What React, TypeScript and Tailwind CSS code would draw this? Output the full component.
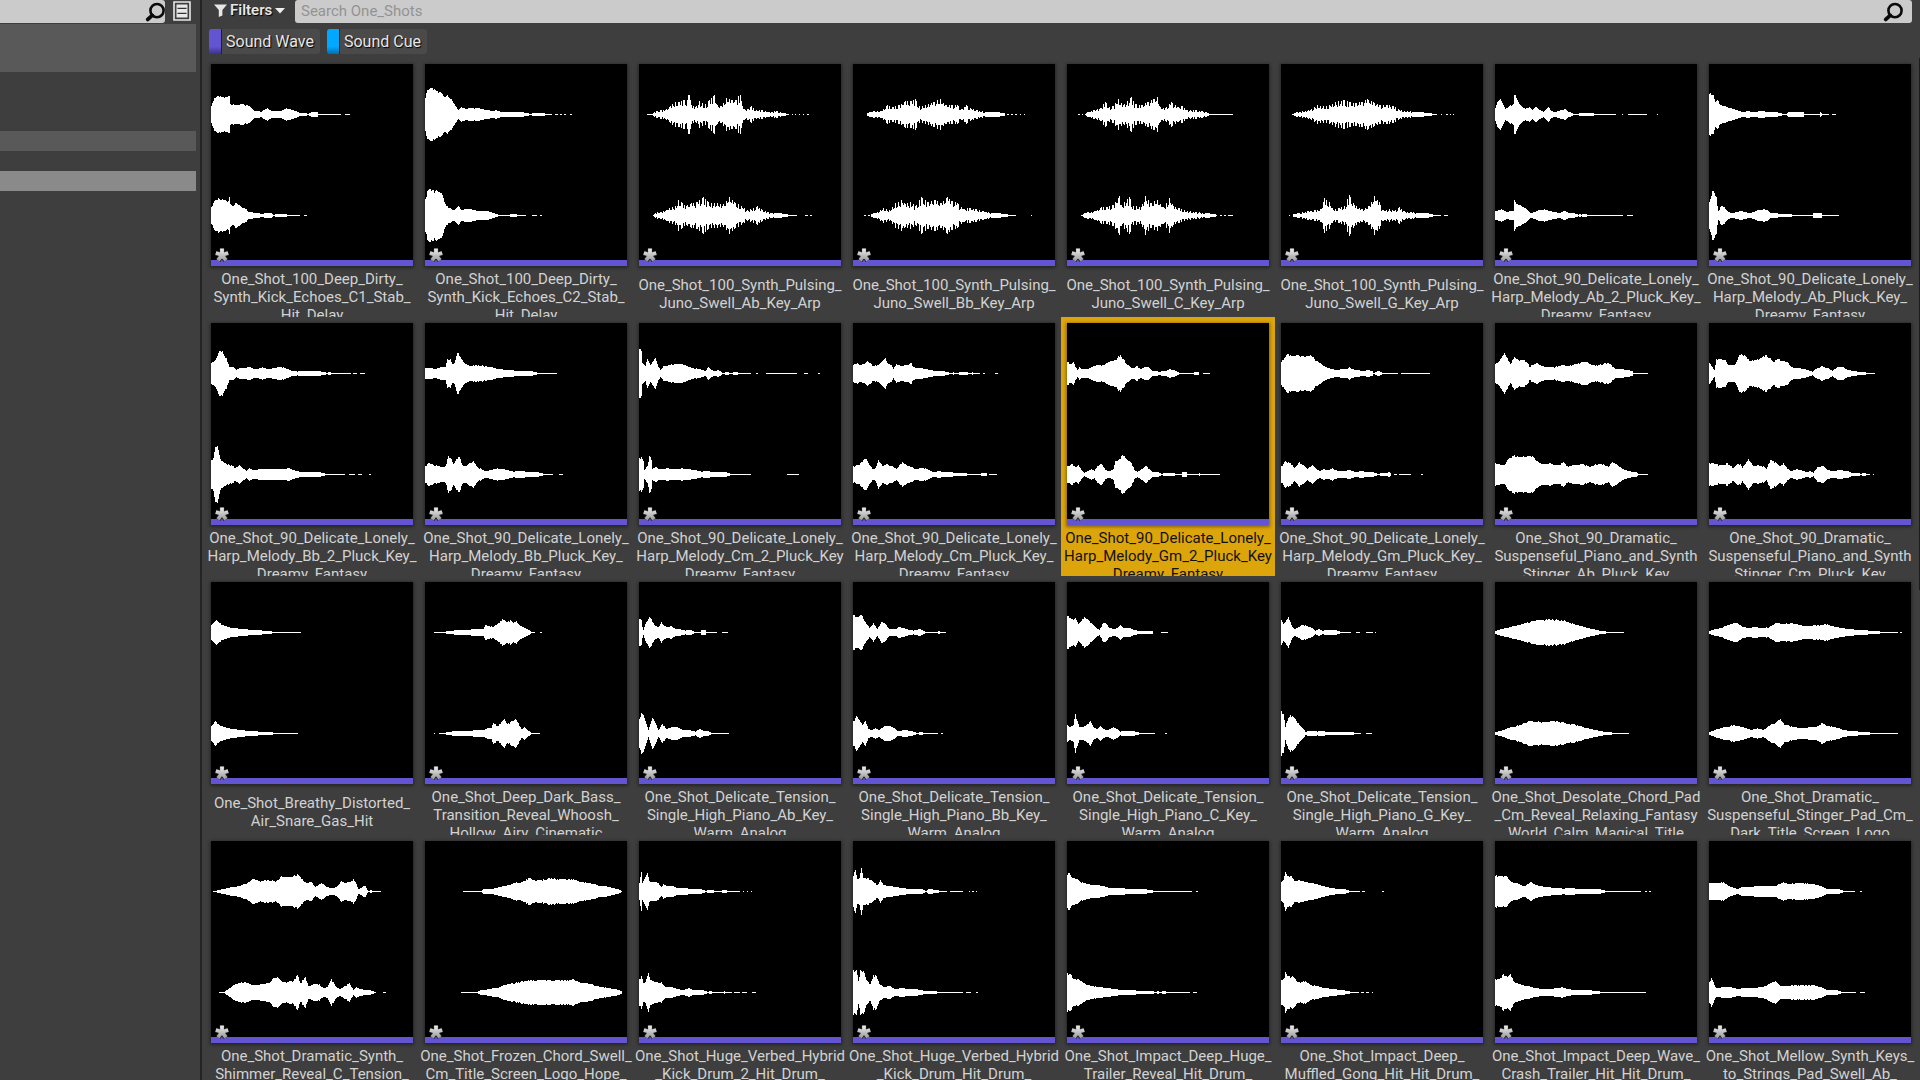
import { useId, useState } from "react";

type Sound = {
  label: string[];
  left: string;
  right: string;
  pulse?: boolean;
};

// Channel envelopes are "x height, x height, ...|dash-dash ..." on a 202 unit wide thumbnail.
const SOUNDS: Sound[] = [
  {
    label: ["One_Shot_100_Deep_Dirty_", "Synth_Kick_Echoes_C1_Stab_", "Hit_Delay"],
    left: "0 8,3 16,6 18,16 17,17 18,18 18,19 10,25 9,31 10,38 8,42 4,44 3,50 2.5,56 6,60 3,70 3,75 6,83 3.5,88 1.5,94 1.5,96 .5,98 1,100 2,106 2,107 .5,130 .5|134-139",
    right: "0 8,3 14,7 17,12 15,17 14,18 18,19 11,22 9,24 12,28 10,32 7,35 6,37 3,42 2.5,48 2,50 1,54 2,60 2,62 .5,66 1.5,75 1.5,76 .5,89 .5|93-96",
  },
  {
    label: ["One_Shot_100_Deep_Dirty_", "Synth_Kick_Echoes_C2_Stab_", "Hit_Delay"],
    left: "0 16,2 24,5 26,9 25,14 22,16 21,19 17,22 19,26 15,30 8,33 4,36 7,40 5,46 6,53 6,58 5,62 4,68 3,70 4,75 2.5,80 2.5,85 2,102 1.5,105 .5,108 1.5,118 1.5,120 .5,127 .5|130-133 135-137 139-141 145-147",
    right: "0 16,2 24,5 26,10 24,16 22,18 17,21 9,25 7,27 5,30 6,33 9,36 5,40 6,46 6,53 4,62 4,70 1.5,75 .5,84 .5,86 1.5,90 1.5,92 .5,101 .5|107-112 115-117",
  },
  {
    label: ["One_Shot_100_Synth_Pulsing_", "Juno_Swell_Ab_Key_Arp"],
    left: "8 .5,14 1,17 3,22 4,27 5,31 8,36 12,40 12,44 14,48 14,49 19,50 19,52 9,56 7,60 13,66 10,70 14,74 18,75 19,78 9,82 8,87 16,92 14,97 14,99 18,101 19,103 8,106 4,112 8,117 4,122 4,130 2,137 3,142 1.5,150 .5|153-154 156-157 160-161 164-165 168-170",
    right: "14 .5,18 3,24 4,30 7,36 9,39 15,43 12,47 9,52 12,58 13,64 18,68 14,72 12,78 12,84 11,90 18,95 13,102 9,108 5,114 7,118 9,122 6,128 3,136 2,144 1.5,152 .5,158 .5|166-169 171-173",
    pulse: true,
  },
  {
    label: ["One_Shot_100_Synth_Pulsing_", "Juno_Swell_Bb_Key_Arp"],
    left: "14 1,20 3,28 3,34 9,40 7,46 9,52 13,58 13,62 15,66 8,72 9,80 12,87 15,92 9,98 9,104 9,108 5,113 9,118 5,124 4,132 2,150 1.5,152 .5|154-156 158-160 162-164 167-168 171-172",
    right: "18 1,24 3,30 7,36 5,42 12,48 15,52 11,57 13,62 9,68 18,74 13,82 15,88 12,94 18,98 14,104 12,110 6,116 7,122 6,130 4,138 2,150 1.5,158 .5,163 .5|11-13 15-17 178-179",
    pulse: true,
  },
  {
    label: ["One_Shot_100_Synth_Pulsing_", "Juno_Swell_C_Key_Arp"],
    left: "18 .5,20 2,26 4,32 5,38 12,42 7,46 8,51 15,56 9,64 17,68 10,74 9,80 12,86 15,90 17,93 7,98 6,104 12,110 7,115 8,120 4,128 4,134 3,140 1.5,142 .5,166 .5|11-13 15-16",
    right: "14 .5,20 3,28 4,34 8,40 8,46 10,52 19,54 10,62 18,66 9,74 8,78 19,83 12,90 15,96 8,102 17,106 9,112 7,120 4,128 3,138 2,148 1,150 .5|153-155 157-159 161-166",
    pulse: true,
  },
  {
    label: ["One_Shot_100_Synth_Pulsing_", "Juno_Swell_G_Key_Arp"],
    left: "11 .5,16 2,24 3,30 5,36 9,42 8,48 9,54 12,62 14,68 12,74 11,80 12,86 15,92 12,98 9,106 9,112 8,118 4,126 3,134 2,144 1.5,156 .5|160-161 165-167 169-170 172-173",
    right: "12 1,18 2,26 4,34 5,40 6,43 17,48 13,52 5,58 7,63 9,68 20,73 10,80 6,88 9,93 19,98 13,101 5,108 6,113 4,118 8,122 4,130 3,136 2,150 1.5,153 .5,160 .5|8-9 163-167",
    pulse: true,
  },
  {
    label: ["One_Shot_90_Delicate_Lonely_", "Harp_Melody_Ab_2_Pluck_Key_", "Dreamy_Fantasy"],
    left: "0 6,2 12,5 15,8 9,10 5,14 8,18 10,19 19,20 19,22 14,25 9,30 5,34 7,37 4,40 7,45 4,48 2,53 7,56 3,60 2,66 4,70 5,73 2,76 1.5,78 .5,83 .5,84 1.5,98 1.5,99 .5,121 .5|127-128 133-152 162-163",
    right: "0 4,6 6,12 3,15 4,18 4,19 15,22 11,26 9,30 7,35 2,40 3,43 5,49 6,54 4,60 3,64 2,69 4,74 2,81 1.5,83 .5,84 1.5,86 .5,88 1.5,91 1.5,92 .5,128 .5|132-138",
  },
  {
    label: ["One_Shot_90_Delicate_Lonely_", "Harp_Melody_Ab_Pluck_Key_", "Dreamy_Fantasy"],
    left: "0 20,4 19,6 12,8 14,11 9,16 8,20 6,25 5,30 3,34 2,38 3,44 2,52 3,60 2,71 1.5,73 .5,77 .5,79 2,94 2,95 .5,110 .5,111 2,113 .5,120 .5|123-127",
    right: "0 13,1 16,3 24,5 22,7 18,8 9,9 4,12 9,15 8,18 4,22 2,28 3,31 4,36 3,40 2,44 3,48 5,54 6,58 5,61 2,70 1.5,82 1,84 .5,103 .5,104 2,112 2,113 .5,130 .5",
  },
  {
    label: ["One_Shot_90_Delicate_Lonely_", "Harp_Melody_Bb_2_Pluck_Key_", "Dreamy_Fantasy"],
    left: "0 10,3 12,6 17,8 22,11 22,13 17,15 15,18 6,22 6,25 3,28 5,34 5,38 6,42 4,46 4,51 6,56 4,62 5,68 6,72 6,76 4,80 2.5,86 1.5,89 2,93 2.5,100 2,112 1.5,116 .5,118 1.5,120 .5,140 .5|142-146 149-154",
    right: "0 14,2 16,4 27,6 28,9 15,12 12,15 10,20 9,24 6,28 9,31 6,35 3,38 6,42 4,48 5,56 5,64 5,70 5,76 6,80 5,85 3,92 2,100 2,112 1.5,114 .5,134 .5|138-144 147-151 158-160",
  },
  {
    label: ["One_Shot_90_Delicate_Lonely_", "Harp_Melody_Bb_Pluck_Key_", "Dreamy_Fantasy"],
    left: "0 5,5 5,10 4,15 6,20 6,22 14,25 14,27 9,29 10,32 20,33 20,36 14,39 10,44 7,50 8,60 7,66 6,74 4,82 3,90 2.5,98 2,110 1.5,112 .5,132 .5",
    right: "0 8,3 11,7 10,12 8,16 7,20 8,23 18,26 15,28 10,31 15,34 17,37 9,40 8,44 11,48 13,52 7,56 5,60 3,66 4,72 6,78 5,82 4,88 2.5,96 3,104 2,116 1.5,118 .5,128 .5|134-138",
  },
  {
    label: ["One_Shot_90_Delicate_Lonely_", "Harp_Melody_Cm_2_Pluck_Key", "Dreamy_Fantasy"],
    left: "0 24,2 22,3 10,6 7,8 14,11 8,13 11,16 15,18 9,21 3,24 7,30 8,36 9,42 9,48 7,54 5,60 4,66 2,69 6,72 3,76 2,78 3,82 1.5,83 .5,89 1.5,90 .5,98 1.5,99 .5,112 .5|117-119 127-158 165-169 179-181",
    right: "0 16,2 17,4 13,5 4,8 8,10 18,12 14,13 5,16 7,22 5,28 6,34 5,42 6,48 5,56 4,62 2.5,68 3,74 2,80 2,89 1.5,91 .5,112 .5|148-160",
  },
  {
    label: ["One_Shot_90_Delicate_Lonely_", "Harp_Melody_Cm_Pluck_Key_", "Dreamy_Fantasy"],
    left: "0 8,4 10,6 8,10 9,14 12,17 10,20 7,24 8,28 11,32 15,34 10,38 8,40 4,43 9,48 7,52 8,58 10,60 6,66 5,72 4,78 3,82 2,94 1.5,96 .5,100 1,104 .5,107 1.5,113 1.5,115 .5,119 1,127 .5|130-132 142-145",
    right: "0 8,5 9,10 14,13 15,16 9,20 5,22 6,25 14,29 8,33 10,36 8,39 8,43 5,46 9,49 12,53 9,58 7,62 5,66 6,72 6,76 4,80 2,86 3,90 2,96 2,100 1.5,112 1.5,115 .5,127 .5,129 1.5,132 1.5,134 .5|136-144",
  },
  {
    label: ["One_Shot_90_Delicate_Lonely_", "Harp_Melody_Gm_2_Pluck_Key", "Dreamy_Fantasy"],
    left: "0 11,3 9,6 11,8 6,10 3,12 6,15 4,20 4,24 6,29 8,36 8,40 10,44 12,48 13,51 17,53 18,56 14,59 9,62 7,66 5,69 7,74 4,77 6,81 6,85 2,92 1.5,98 2,102 4,106 3,110 1.5,112 .5,126 .5,128 1.5,131 1.5,132 .5|136-143",
    right: "0 8,5 10,8 7,11 9,14 4,17 1,20 3,24 5,27 3,30 8,34 10,38 4,42 3,46 5,48 13,51 14,54 18,57 18,60 14,64 11,67 4,70 2,74 5,78 8,82 5,85 2,93 1.5,94 .5,98 1.5,106 1.5,108 .5,114 .5,115 2,119 2,120 .5,131 .5,132 1.5,133 .5,153 .5",
  },
  {
    label: ["One_Shot_90_Delicate_Lonely_", "Harp_Melody_Gm_Pluck_Key_", "Dreamy_Fantasy"],
    left: "0 11,3 15,6 19,10 17,16 18,22 17,29 18,33 14,38 10,44 6,50 4,56 3,60 4,66 4,68 6,70 4,76 3,82 2,87 3,91 2,92 .5,95 1.5,98 2,101 .5,117 .5|120-149",
    right: "0 8,4 13,9 11,13 6,18 12,23 8,26 5,31 9,34 6,38 3,42 5,46 4,51 6,56 3,62 3,68 4,74 2,80 3,86 2,94 1.5,96 .5,102 1.5,106 1.5,108 2,110 .5|113-116 118-130 140-142",
  },
  {
    label: ["One_Shot_90_Dramatic_", "Suspenseful_Piano_and_Synth", "Stinger_Ab_Pluck_Key"],
    left: "0 9,4 12,9 20,12 15,15 9,19 16,23 13,28 13,33 9,34 6,37 8,42 10,46 7,52 6,60 6,66 8,72 7,80 9,88 11,92 11,98 8,104 8,110 10,115 9,119 5,126 4,132 3,137 2,138 .5,153 .5",
    right: "0 11,5 9,10 10,12 14,17 18,19 19,25 17,32 18,38 17,43 12,48 10,54 11,60 9,64 9,68 12,72 8,80 9,88 10,94 7,100 10,108 10,113 7,117 12,121 10,126 6,130 4,138 2,142 1.5,143 .5,153 .5",
  },
  {
    label: ["One_Shot_90_Dramatic_", "Suspenseful_Piano_and_Synth", "Stinger_Cm_Pluck_Key"],
    left: "0 10,3 6,5 3,7 14,12 14,16 13,19 8,22 8,26 9,30 18,35 18,40 12,46 13,51 15,56 18,61 15,64 11,68 14,74 12,78 11,82 6,88 5,95 4,103 1.5,108 5,112 7,116 5,119 5,123 2,128 6,133 6,139 3,145 2,150 1,154 1.5,158 .5,166 .5",
    right: "0 11,4 11,10 9,14 9,18 11,24 6,28 10,31 10,33 6,39 15,44 8,48 9,54 8,57 5,61 14,66 12,70 8,74 11,78 5,82 3,88 5,94 3,98 2,100 3,104 1.5,108 7,114 8,118 4,124 3,130 4,138 3,142 1.5,148 1.5,152 .5,154 1.5,158 .5,161 .5|164-165",
  },
  {
    label: ["One_Shot_Breathy_Distorted_", "Air_Snare_Gas_Hit"],
    left: "0 7,3 10,5 12,8 9,13 6,22 4,32 3,42 2,52 1.5,60 1,61 .5,90 .5",
    right: "0 7,4 12,8 8,13 6,22 4,34 2.5,48 1.5,61 1,62 .5,87 .5",
  },
  {
    label: ["One_Shot_Deep_Dark_Bass_", "Transition_Reveal_Whoosh_", "Hollow_Airy_Cinematic"],
    left: "9 .5,20 .5,22 1.5,28 1.5,36 2.5,42 2,48 3,54 3,58 3,60 7,64 6,68 5,72 8,77 13,82 10,85 12,88 9,91 11,94 7,98 5,102 3,105 1,110 .5|115-117",
    right: "14 .5,20 .5,22 1.5,44 2,50 3,58 3,62 5,66 5,68 10,72 7,76 11,79 14,82 9,87 12,90 14,93 10,96 4,99 6,102 3,105 1,107 .5,115 .5|9-10",
  },
  {
    label: ["One_Shot_Delicate_Tension_", "Single_High_Piano_Ab_Key_", "Warm_Analog"],
    left: "0 13,2 12,3 5,4 2,6 8,10 15,12 13,15 7,19 5,22 10,25 6,28 5,32 6,36 3,40 3,46 1.5,50 2.5,53 1.5,55 .5,61 .5,62 2,66 2,67 .5,78 .5|83-89",
    right: "0 14,2 20,4 18,6 12,9 3,13 15,16 10,19 3,23 9,27 4,32 6,38 6,44 3,50 3,56 1.5,60 4,65 2,70 1.5,72 .5,90 .5",
  },
  {
    label: ["One_Shot_Delicate_Tension_", "Single_High_Piano_Bb_Key_", "Warm_Analog"],
    left: "0 17,4 15,8 17,12 10,16 4,20 9,24 3,28 10,32 8,36 3,42 3,46 5,50 4,56 2,60 1.5,66 3,70 1.5,72 .5,84 .5,86 1.5,87 .5,93 .5",
    right: "0 12,3 17,6 13,9 8,12 12,15 4,18 3,22 5,26 3,31 7,36 7,41 5,44 2,52 3,60 1.5,64 .5,68 1.5,70 .5,85 .5|88-90",
  },
  {
    label: ["One_Shot_Delicate_Tension_", "Single_High_Piano_C_Key_", "Warm_Analog"],
    left: "0 16,3 14,6 12,8 14,11 8,17 15,20 13,24 9,28 5,32 2,35 8,38 9,42 4,48 3,53 7,57 4,62 4,66 2.5,70 1.5,84 1.5,86 .5|94-101",
    right: "0 8,3 6,6 8,8 19,10 12,12 6,16 6,20 9,23 12,26 6,30 4,33 7,36 4,40 3,46 6,50 4,53 1.5,57 2,70 1.5,72 .5,88 .5|98-100",
  },
  {
    label: ["One_Shot_Delicate_Tension_", "Single_High_Piano_G_Key_", "Warm_Analog"],
    left: "0 12,2 8,4 10,7 15,9 10,11 5,13 3,16 4,20 7,24 7,28 5,31 4,34 1.5,38 3,41 1.5,50 2,57 1.5,59 .5,70 .5|75-79 85-92 94-95",
    right: "0 22,2 19,4 6,5 10,7 15,9 18,13 15,17 10,21 5,24 1.5,32 2,36 1.5,40 2,44 1.5,60 1.5,66 1.5,72 1,80 .5|85-91",
  },
  {
    label: ["One_Shot_Desolate_Chord_Pad", "_Cm_Reveal_Relaxing_Fantasy", "World_Calm_Magical_Title"],
    left: "0 1,6 3,14 5,22 7,30 9,38 11,46 12,54 13,62 12,70 11,78 8,86 6,92 4,98 3,104 1.5,110 1,112 .5,129 .5",
    right: "0 1,8 3,16 6,24 8,32 11,36 12,48 11,56 12,66 11,76 9,84 7,92 5,100 3,108 1.5,116 1,118 .5,134 .5",
  },
  {
    label: ["One_Shot_Dramatic_", "Suspenseful_Stinger_Pad_Cm_", "Dark_Title_Screen_Logo"],
    left: "0 1,6 3,12 4,18 7,24 9,28 9,32 6,38 4,46 5,54 4,60 5,66 9,74 8,82 9,90 7,98 6,106 7,112 7,118 8,124 6,132 4,140 3,150 2,160 1.5,170 1,172 .5,189 .5|191-193",
    right: "0 1,8 4,16 6,24 8,30 7,36 5,42 3,48 5,54 3,58 6,62 9,66 10,71 14,76 8,84 6,92 5,100 6,106 6,113 10,118 7,126 6,134 3,142 2,150 1.5,160 1,164 .5,189 .5",
  },
  {
    label: ["One_Shot_Dramatic_Synth_", "Shimmer_Reveal_C_Tension_", "Title"],
    left: "2 .5,6 1,12 2,20 4,28 5,36 8,42 12,48 10,56 11,62 10,67 11,70 15,76 14,82 15,86 17,90 12,94 9,100 9,104 4,110 8,115 4,122 3,126 5,130 10,134 8,138 9,142 12,145 7,147 2,150 3,152 5,154 5,156 1.5,157 .5,160 1.5,161 .5,170 .5",
    right: "8 .5,14 1,18 4,24 8,30 10,36 9,42 7,50 8,58 9,62 14,66 15,70 11,76 10,82 11,86 17,89 9,94 15,97 6,102 8,108 8,112 4,116 5,120 13,124 6,128 3,132 5,138 9,142 2,145 5,149 3,156 2,160 1.5,165 .5|172-175",
  },
  {
    label: ["One_Shot_Frozen_Chord_Swell_", "Cm_Title_Screen_Logo_Hope_", "Pad"],
    left: "38 .5,56 .5,58 2,66 2,74 4,82 6,90 8,98 10,103 13,108 11,116 11,124 13,132 12,140 12,148 12,156 9,164 8,172 6,180 5,188 3,194 1.5,197 .5",
    right: "36 .5,52 .5,54 1.5,64 3,74 5,82 8,90 9,96 11,108 12,120 12,132 12,140 12,148 13,154 10,162 9,172 6,182 4,190 3,197 1",
  },
  {
    label: ["One_Shot_Huge_Verbed_Hybrid", "_Kick_Drum_2_Hit_Drum_", "Impact"],
    left: "0 8,2 19,3 8,5 12,8 18,10 10,13 9,16 9,19 8,22 4,24 7,28 5,34 5,38 3,44 3,50 2.5,58 2,64 1.5,66 .5,70 1.5,73 1.5,75 .5,82 .5,84 1.5,86 1.5,88 .5,101 .5|104-105 108-109 112-113",
    right: "0 13,2 16,4 9,6 10,9 19,11 12,16 10,22 10,26 5,32 5,38 3,44 2,50 4,53 2,58 2,66 1.5,68 .5,72 1.5,73 .5,84 .5,85 1.5,86 .5,93 .5|95-101 103-108 113-117",
  },
  {
    label: ["One_Shot_Huge_Verbed_Hybrid", "_Kick_Drum_Hit_Drum_", "Impact"],
    left: "0 15,2 21,4 12,6 13,8 23,10 13,14 13,18 11,22 8,24 6,27 11,30 6,36 5,42 4,50 3,56 2,66 2,70 1.5,72 .5,76 2,80 1.5,84 1.5,86 .5,94 .5|97-110 116-117 119-121 123-124",
    right: "0 22,3 22,5 11,7 22,10 21,13 12,17 8,20 17,23 16,26 8,31 5,36 6,42 3,48 4,56 3,62 3,70 1.5,82 1.5,84 .5,110 .5|113-118 123-125",
  },
  {
    label: ["One_Shot_Impact_Deep_Huge_", "Trailer_Reveal_Hit_Drum_", "Impact"],
    left: "0 16,2 18,5 13,10 12,13 9,18 8,24 6,30 6,36 5,42 3,50 3,56 3,60 2,70 2,82 1.5,85 1.5,86 .5,125 .5|129-131",
    right: "0 19,3 18,6 13,10 13,16 9,24 6,32 5,40 4,48 3,54 2,62 2,70 1.5,86 1,88 .5,91 1.5,92 .5,98 1.5,99 .5,123 .5|126-130",
  },
  {
    label: ["One_Shot_Impact_Deep_", "Muffled_Gong_Hit_Hit_Drum_", "Impact"],
    left: "0 9,2 11,4 19,6 15,10 15,13 10,18 11,26 9,34 7,42 5,50 3,58 2,66 1.5,68 .5,79 .5|81-84 101-103",
    right: "0 12,3 14,4 20,7 16,12 15,16 10,24 11,30 7,36 6,44 4,52 3,60 2,68 1,70 .5,78 .5|80-83 85-88 91-92",
  },
  {
    label: ["One_Shot_Impact_Deep_Wave_", "Crash_Trailer_Hit_Hit_Drum_", "Impact"],
    left: "0 15,5 15,11 15,14 11,19 8,22 8,26 6,30 5,35 9,38 7,44 5,52 4,60 3,68 2.5,76 3,84 2,96 2,108 1.5,110 .5,146 .5|150-152 154-156",
    right: "0 13,4 13,8 18,12 15,15 18,18 11,24 8,32 6,40 4,48 3,56 3,66 5,72 3,80 2,92 2,104 1,106 .5,151 .5",
  },
  {
    label: ["One_Shot_Mellow_Synth_Keys_", "to_Strings_Pad_Swell_Ab_", "Key"],
    left: "0 8,6 8,14 9,18 6,22 4,26 3,28 2,32 4,40 4,48 5,56 5,66 5,74 9,80 7,88 8,96 8,102 7,108 6,114 4,118 2,124 2,132 1.5,134 .5,146 .5|151-153",
    right: "0 10,2 14,4 10,6 5,8 4,16 5,22 5,28 3,34 4,42 4,50 5,56 6,62 9,66 11,70 7,78 6,86 7,94 7,102 7,108 6,114 4,118 2,124 2,130 1.5,132 .5,147 .5|151-156",
  },
];

function noise(n: number) {
  const v = Math.sin(n * 127.1 + 11.7) * 43758.5453;
  return v - Math.floor(v);
}

function channelPath(source: string, centre: number, pulse: boolean) {
  const [envelope, dashes] = source.split("|");
  const points = envelope.split(",").map((pair) => pair.trim().split(" ").map(Number));
  let path = "";
  for (let i = 0; i < points.length - 1; i++) {
    const [x0, h0] = points[i];
    const [x1, h1] = points[i + 1];
    for (let x = x0; x < x1; x++) {
      let h = h0 + ((h1 - h0) * (x - x0)) / (x1 - x0);
      if (pulse && h > 2) {
        h = x === x0 || x % 3 === 0 ? h : h * (0.54 + 0.3 * noise(x));
      } else if (h > 4 && x !== x0) {
        h *= 1.05 - 0.13 * noise(x + centre);
      }
      if (h > 1.5) {
        h += 0.4;
      }
      const half = Math.max(0.5, Math.round(h - 0.5) + 0.5);
      path += `M${x} ${centre - half}h1v${half * 2}h-1z`;
    }
  }
  for (const dash of dashes ? dashes.split(" ") : []) {
    const [from, to] = dash.split("-").map(Number);
    path += `M${from} ${centre - 0.5}h${to - from}v1h${from - to}z`;
  }
  return path;
}

function Waveform({ sound }: { sound: Sound }) {
  const pulse = sound.pulse === true;
  return (
    <svg
      viewBox="0 0 202 202"
      className="block h-full w-full"
      fill="#fff"
      shapeRendering="crispEdges"
      aria-hidden="true"
    >
      <path d={channelPath(sound.left, 50.5, pulse)} />
      <path d={channelPath(sound.right, 151.5, pulse)} />
    </svg>
  );
}

function UnsavedMark() {
  const id = useId();
  const arms = "M9 9V2.6M9 9L15.2 7M9 9L12.9 14.4M9 9L5.1 14.4M9 9L2.8 7";
  return (
    <svg viewBox="0 0 18 18" className="absolute -bottom-1 left-[2px] size-[18px]" fill="none" aria-hidden="true">
      <defs>
        <linearGradient id={id} x1="0" y1="2" x2="0" y2="15" gradientUnits="userSpaceOnUse">
          <stop offset="0" stopColor="#f2f2f2" />
          <stop offset="1" stopColor="#9a9a9a" />
        </linearGradient>
      </defs>
      <path d={arms} stroke="#1c1c1c" strokeWidth="5.4" strokeLinejoin="round" />
      <path d={arms} stroke={`url(#${id})`} strokeWidth="3.8" />
    </svg>
  );
}

function SearchIcon() {
  return (
    <svg viewBox="0 0 20 20" className="size-5 shrink-0" fill="none" stroke="#0a0a0a" aria-hidden="true">
      <circle cx="12" cy="8.6" r="6.6" strokeWidth="2.6" />
      <path d="M7.2 13.4L2.8 17.4" strokeWidth="3.8" strokeLinecap="round" />
    </svg>
  );
}

function Tile({ sound, selected, onSelect }: { sound: Sound; selected: boolean; onSelect: () => void }) {
  return (
    <button
      type="button"
      onClick={onSelect}
      aria-pressed={selected}
      className={`flex h-[259px] min-w-0 flex-col px-[6px] pt-[6px] ${
        selected ? "bg-[#dca50c] text-[#14110a]" : "text-[#d2d2d2]"
      }`}
    >
      <span className="relative block aspect-square w-full shrink-0 border-b-[6px] border-[#6355d2] bg-black shadow-[0_1px_3px_1px_rgba(0,0,0,0.4)]">
        <span className="absolute inset-x-0 top-0 block aspect-square">
          <Waveform sound={sound} />
        </span>
        <span className="absolute inset-x-0 -bottom-[6px] block h-[6px] bg-[#6355d2]" />
        <UnsavedMark />
      </span>
      <span className="-mx-[6px] mt-1 flex min-h-0 flex-1 flex-col items-center overflow-hidden">
        <span className="my-auto block text-center text-[15px] leading-[18px] whitespace-nowrap">
          {sound.label.map((line) => (
            <span key={line} className="block">
              {line}
            </span>
          ))}
        </span>
      </span>
    </button>
  );
}

function FilterChip({ name, swatch }: { name: string; swatch: string }) {
  return (
    <button
      type="button"
      className="flex h-[25px] items-center overflow-hidden rounded-[3px] bg-[#4a4a4a] pr-[6px] text-base text-[#e6e6e6] [text-shadow:1px_1px_1px_#000]"
    >
      <span className={`mr-1 h-full w-[13px] border-r border-[#222] bg-linear-to-b from-70% ${swatch}`} />
      {name}
    </button>
  );
}

export default function App() {
  const [selected, setSelected] = useState(12);

  return (
    <div className="flex h-screen overflow-hidden bg-[#3e3e3e] font-['Roboto',sans-serif]">
      <aside className="flex w-[202px] shrink-0 flex-col border-r-2 border-[#242424]">
        <div className="flex h-[23px] items-start">
          <label className="flex h-[23px] w-[165px] items-center justify-end rounded-r-[3px] bg-[#cbcbcb]">
            <input type="text" aria-label="Search folders" className="min-w-0 flex-1 bg-transparent outline-none" />
            <SearchIcon />
          </label>
          <button type="button" aria-label="Toggle sources view" className="ml-2 mt-px">
            <svg viewBox="0 0 18 20" className="h-5 w-[18px]" fill="none" stroke="#e8e8e8" aria-hidden="true">
              <path d="M1 1H17V19H1z" strokeWidth="1.6" />
              <path d="M3.5 3.5h11v13h-11z" fill="#e8e8e8" stroke="none" />
              <path d="M4.5 7.4h9M4.5 12.4h9" stroke="#333" strokeWidth="1.3" />
            </svg>
          </button>
        </div>
        <div className="mt-px mr-1 h-[48px] bg-[#595959]" />
        <div className="mt-[59px] mr-1 h-[20px] bg-[#595959]" />
        <div className="mt-[20px] mr-1 h-[20px] bg-[#8a8a8a]" />
      </aside>

      <main className="flex min-w-0 flex-1 flex-col">
        <div className="flex h-[23px] pr-2">
          <button
            type="button"
            className="flex w-[93px] shrink-0 items-center pb-[3px] pl-3 text-[15px] leading-5 font-semibold text-[#e6e6e6] [text-shadow:1px_1px_1px_#000]"
          >
            <svg viewBox="0 0 13 13" className="mr-[3px] size-[13px]" fill="#e6e6e6" aria-hidden="true">
              <path d="M0 .5H13L8.4 6V11.4L4.8 13V6z" />
            </svg>
            Filters
            <svg viewBox="0 0 10 6" className="mt-[2px] ml-[3px] h-[6px] w-[10px]" fill="#f0f0f0" aria-hidden="true">
              <path d="M0 0H10L5 5.6z" />
            </svg>
          </button>
          <label className="flex min-w-0 flex-1 items-center rounded-[3px] bg-[#cbcbcb] pr-[9px] pl-[6px]">
            <input
              type="text"
              aria-label="Search assets"
              placeholder="Search One_Shots"
              className="min-w-0 flex-1 bg-transparent text-[15px] text-[#222] outline-none placeholder:text-[#939393]"
            />
            <SearchIcon />
          </label>
        </div>
        <div className="flex gap-[7px] pt-[6px] pl-[7px]">
          <FilterChip name="Sound Wave" swatch="from-[#6355d2] to-[#3a3190]" />
          <FilterChip name="Sound Cue" swatch="from-[#00a8ff] to-[#0070b0]" />
        </div>
        <div className="mt-1 flex min-h-0 flex-1 items-start overflow-hidden pl-[3px]">
          <div className="grid min-w-0 flex-1 grid-cols-8">
            {SOUNDS.map((sound, index) => (
              <Tile
                key={sound.label.join("")}
                sound={sound}
                selected={index === selected}
                onSelect={() => setSelected(index)}
              />
            ))}
          </div>
          <div className="ml-[2px] h-[532px] w-px bg-[#1c1c1c]" />
        </div>
      </main>
    </div>
  );
}
